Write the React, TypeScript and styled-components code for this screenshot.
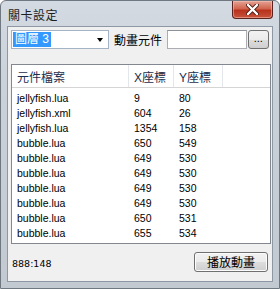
import React from "react";
import styled, { createGlobalStyle } from "styled-components";

const GlobalStyle = createGlobalStyle`
  html, body { margin: 0; padding: 0; background: #ffffff; }
  * { box-sizing: border-box; }
`;

const cjk = `"Liberation Sans", "Noto Sans CJK TC", sans-serif`;

const Window = styled.div`
  width: 280px;
  height: 289px;
  display: flex;
  flex-direction: column;
  background: linear-gradient(180deg, #d4dae1 0%, #cad1d9 30%, #c2c9d1 100%);
  border: 1px solid #6f7780;
  border-radius: 6px 6px 0 0;
  overflow: hidden;
  font-family: ${cjk};
`;

const TitleBar = styled.div`
  height: 25px;
  display: flex;
  justify-content: space-between;
  align-items: flex-start;
  flex-shrink: 0;
`;

const Title = styled.span`
  margin: 5px 0 0 7px;
  font-size: 12px;
  color: #1e1e1e;
  letter-spacing: 0.5px;
`;

const CloseButton = styled.div`
  width: 41px;
  height: 18px;
  margin-right: 6px;
  display: flex;
  align-items: center;
  justify-content: center;
  border: 1px solid #5a2320;
  border-top: none;
  border-radius: 0 0 4px 4px;
  background: linear-gradient(180deg, #e4a394 0%, #d1654e 45%, #b8321d 55%, #c8543c 100%);
  box-shadow: inset 0 0 0 1px rgba(255, 200, 190, 0.5);
`;

const Client = styled.div`
  flex: 1;
  margin: 0 6px 6px 6px;
  background: #f0f0f0;
  border: 1px solid #8d98a4;
  display: flex;
  flex-direction: column;
  padding: 3px 3px 0 3px;
`;

const TopRow = styled.div`
  display: flex;
  align-items: center;
  height: 19px;
`;

const Combo = styled.div`
  width: 101px;
  height: 19px;
  background: #fff;
  border: 1px solid #a4b4c6;
  display: flex;
  align-items: center;
  padding: 0 0 0 1px;
`;

const ComboSelected = styled.span`
  background: #3399ff;
  color: #fff;
  font-size: 12px;
  line-height: 15px;
  padding: 0 2px;
`;

const Arrow = styled.span`
  margin-left: auto;
  margin-right: 5px;
  width: 0;
  height: 0;
  border-left: 3.5px solid transparent;
  border-right: 3.5px solid transparent;
  border-top: 4px solid #000;
`;

const Label = styled.span`
  margin-left: 5px;
  font-size: 12px;
  color: #000;
  white-space: nowrap;
`;

const TextInput = styled.div`
  width: 82px;
  height: 19px;
  margin-left: 5px;
  background: #fff;
  border: 1px solid #abadb3;
  border-top-color: #8e9196;
`;

const SmallButton = styled.div`
  width: 22px;
  height: 19px;
  margin-left: 1px;
  border: 1px solid #707070;
  border-radius: 3px;
  background: linear-gradient(180deg, #f2f2f2 0%, #ebebeb 50%, #dddddd 51%, #cfcfcf 100%);
  font-size: 11px;
  display: flex;
  align-items: flex-end;
  justify-content: center;
  padding-bottom: 4px;
  line-height: 1;
  color: #000;
`;

const List = styled.div`
  margin-top: 15px;
  width: 260px;
  height: 180px;
  background: #fff;
  border: 1px solid #828790;
  display: flex;
  flex-direction: column;
`;

const Row = styled.div<{ $header?: boolean }>`
  display: grid;
  grid-template-columns: 117px 45px 49px 1fr;
  height: ${(p) => (p.$header ? "23px" : "15px")};
  align-items: center;
  border-bottom: ${(p) => (p.$header ? "1px solid #d5d5d5" : "none")};
  margin-bottom: ${(p) => (p.$header ? "2px" : "0")};
  font-size: ${(p) => (p.$header ? "12px" : "10.5px")};
  color: ${(p) => (p.$header ? "#1e2d4b" : "#000")};
`;

const Cell = styled.span<{ $header?: boolean }>`
  padding-left: 5px;
  height: 100%;
  display: flex;
  align-items: center;
  white-space: nowrap;
  border-right: ${(p) => (p.$header ? "1px solid #e3e6eb" : "none")};
`;

const Footer = styled.div`
  flex: 1;
  display: flex;
  align-items: center;
  justify-content: space-between;
  padding: 0 1px 2px 1px;
`;

const Status = styled.span`
  font-family: "DejaVu Sans", sans-serif;
  font-size: 9.5px;
  color: #000;
  margin-top: 4px;
`;

const PushButton = styled.div`
  width: 74px;
  height: 20px;
  border: 1px solid #707070;
  border-radius: 3px;
  background: linear-gradient(180deg, #f2f2f2 0%, #ebebeb 50%, #dddddd 51%, #cfcfcf 100%);
  box-shadow: inset 0 0 0 1px #fcfcfc;
  display: flex;
  align-items: center;
  justify-content: center;
  font-size: 12px;
  color: #000;
`;

const rows = [
  ["jellyfish.lua", "9", "80"],
  ["jellyfish.xml", "604", "26"],
  ["jellyfish.lua", "1354", "158"],
  ["bubble.lua", "650", "549"],
  ["bubble.lua", "649", "530"],
  ["bubble.lua", "649", "530"],
  ["bubble.lua", "649", "530"],
  ["bubble.lua", "649", "530"],
  ["bubble.lua", "650", "531"],
  ["bubble.lua", "655", "534"],
];

export default function App() {
  return (
    <>
      <GlobalStyle />
      <Window>
        <TitleBar>
          <Title>關卡設定</Title>
          <CloseButton>
            <svg width="13" height="11" viewBox="0 0 13 11">
              <path
                d="M2 1 L11 10 M11 1 L2 10"
                stroke="#4a1a12"
                strokeWidth="4"
                strokeLinecap="round"
              />
              <path
                d="M2 1 L11 10 M11 1 L2 10"
                stroke="#ffffff"
                strokeWidth="2.4"
                strokeLinecap="round"
              />
            </svg>
          </CloseButton>
        </TitleBar>
        <Client>
          <TopRow>
            <Combo>
              <ComboSelected>圖層 3</ComboSelected>
              <Arrow />
            </Combo>
            <Label>動畫元件</Label>
            <TextInput />
            <SmallButton>...</SmallButton>
          </TopRow>
          <List>
            <Row $header>
              <Cell $header>元件檔案</Cell>
              <Cell $header>X座標</Cell>
              <Cell $header>Y座標</Cell>
              <span />
            </Row>
            {rows.map((r, i) => (
              <Row key={i}>
                <Cell>{r[0]}</Cell>
                <Cell>{r[1]}</Cell>
                <Cell>{r[2]}</Cell>
                <span />
              </Row>
            ))}
          </List>
          <Footer>
            <Status>888:148</Status>
            <PushButton>播放動畫</PushButton>
          </Footer>
        </Client>
      </Window>
    </>
  );
}
